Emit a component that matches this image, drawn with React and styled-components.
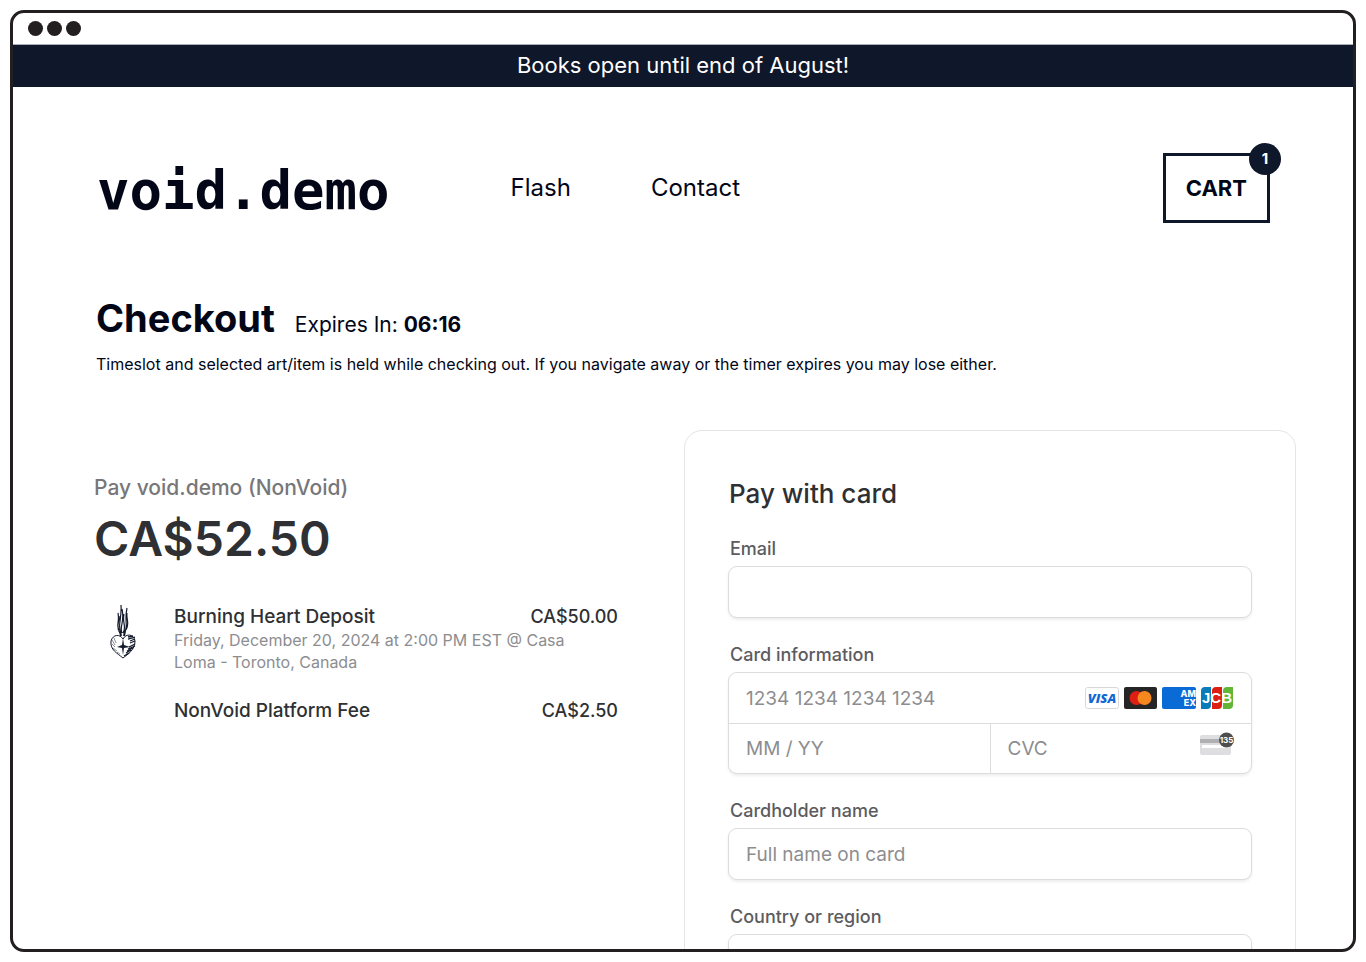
import React from "react";
import styled, { createGlobalStyle } from "styled-components";

// Styles
const GlobalStyle = createGlobalStyle`
  * {
    box-sizing: border-box;
  }

  body {
    margin: 0;
    background: #ffffff;
    color: #020617;
    font-family: Inter, "Liberation Sans", sans-serif;
  }

  h1, h2, p, ul {
    margin: 0;
    padding: 0;
  }
`;

const Browser = styled.div`
  height: calc(100vh - 20px);
  margin: 10px;
  border: 3px solid #231f20;
  border-radius: 14px;
  overflow: hidden;
`;

const TitleBar = styled.div`
  display: flex;
  align-items: center;
  gap: 4px;
  height: 31px;
  padding: 0 15px;
`;

const Dot = styled.span`
  width: 15px;
  height: 15px;
  border-radius: 50%;
  background: #231f20;
`;

const Banner = styled.p`
  padding: 5px 6px 7px;
  border-top: 1px solid #a9adb5;
  background: #0f172a;
  color: #ffffff;
  font-size: 22px;
  line-height: 30px;
  text-align: center;
`;

const Header = styled.header`
  display: flex;
  align-items: center;
  padding: 66px 83px 0 84px;
`;

const Logo = styled.a`
  padding-top: 6px;
  color: #020617;
  font-family: "DejaVu Sans Mono", monospace;
  font-size: 54px;
  font-weight: 700;
  line-height: 64px;
  text-decoration: none;
`;

const Nav = styled.nav`
  display: flex;
  gap: 80px;
  margin-left: 121px;

  a {
    color: #020617;
    font-size: 24px;
    line-height: 32px;
    text-decoration: none;
  }
`;

const CartButton = styled.button`
  position: relative;
  height: 70px;
  margin-left: auto;
  padding: 0 20px;
  border: 3px solid #0f172a;
  background: #ffffff;
  color: #020617;
  font-family: inherit;
  font-size: 22px;
  font-weight: 700;
`;

const Badge = styled.span`
  position: absolute;
  top: -13px;
  right: -14px;
  width: 32px;
  border-radius: 50%;
  background: #0f172a;
  color: #ffffff;
  font-size: 15px;
  line-height: 32px;
`;

const Intro = styled.section`
  padding: 71px 83px 0;
`;

const TitleRow = styled.div`
  display: flex;
  align-items: baseline;
  gap: 20px;

  h1 {
    font-size: 38px;
    font-weight: 700;
    line-height: 48px;
  }

  p {
    font-size: 21px;
  }
`;

const Note = styled.p`
  margin-top: 10px;
  font-size: 16px;
  line-height: 24px;
`;

const Checkout = styled.main`
  display: grid;
  grid-template-columns: 524fr 612fr;
  gap: 66px;
  padding: 54px 57px 0 81px;
`;

const Summary = styled.section`
  padding-top: 44px;
`;

const Payee = styled.p`
  color: #77777a;
  font-size: 21px;
  font-weight: 500;
  line-height: 28px;
`;

const Total = styled.p`
  margin: 7px 0 36px;
  color: #2e3033;
  font-size: 48px;
  font-weight: 600;
  line-height: 60px;
`;

const Items = styled.ul`
  display: grid;
  gap: 26px;
  list-style: none;
`;

const Item = styled.li`
  display: grid;
  grid-template-columns: 58px 1fr auto;
  column-gap: 22px;
  color: #2e3033;
  font-size: 19px;
  font-weight: 500;
  line-height: 24px;
`;

const Price = styled.span`
  font-size: 18px;
`;

const Details = styled.p`
  grid-column: 2 / -1;
  padding-right: 36px;
  color: #8d8d90;
  font-size: 16px;
  font-weight: 400;
  line-height: 22px;
`;

const Thumb = styled.div`
  grid-row: span 2;
  height: 56px;
  text-align: center;
`;

const Panel = styled.form`
  padding: 43px;
  border: 1px solid #e4e4e6;
  border-radius: 18px;

  h2 {
    margin-bottom: 23px;
    padding-left: 1px;
    color: #2e3033;
    font-size: 26px;
    font-weight: 500;
    line-height: 40px;
  }
`;

const Field = styled.div`
  margin-bottom: 25px;

  label {
    display: block;
    margin-bottom: 5px;
    padding-left: 2px;
    color: #5c5c60;
    font-size: 18px;
    font-weight: 500;
    line-height: 24px;
  }
`;

const Control = styled.div`
  border: 1px solid #dcdcdf;
  border-radius: 9px;
  background: #ffffff;
  box-shadow: 0 2px 3px rgba(0, 0, 0, 0.07);
`;

const Row = styled.div`
  display: flex;
  align-items: center;
  height: 50px;
  padding: 0 18px 0 17px;

  & + & {
    padding: 0;
    border-top: 1px solid #dcdcdf;
  }
`;

const Cell = styled.div`
  display: flex;
  flex: 1;
  align-items: center;
  height: 100%;
  padding: 0 17px;

  & + & {
    border-left: 1px solid #dcdcdf;
  }
`;

const Input = styled.input`
  flex: 1;
  width: 100%;
  min-width: 0;
  height: 100%;
  padding: 0;
  border: 0;
  outline: 0;
  background: transparent;
  color: #2e3033;
  font-family: inherit;
  font-size: 19px;

  &::placeholder {
    color: #8d8d90;
    opacity: 1;
  }
`;

const Select = styled.select`
  width: 100%;
  height: 50px;
  padding: 0 17px;
  border: 0;
  border-radius: 9px;
  background: #ffffff;
  font-family: inherit;
  font-size: 19px;
`;

const Brands = styled.div`
  display: flex;
  gap: 5px;
`;

const CvcHint = styled.span`
  display: flex;
  padding-bottom: 9px;
`;

// Icons
function HeartArt() {
  return (
    <svg width="28" height="56" viewBox="0 0 28 56" fill="none" stroke="#151b2c">
      <path d="M11 28C6 22 11 17 9 8M12 28C8 21 13 15 12 0M13 28C10 22 16 17 13 4M15 28C20 22 15 17 18 3M14 28C18 22 13 18 15 9M17 25C21 19 17 14 18 8M10 25C7 20 11 16 10 11" strokeWidth="1.2" />
      <path d="M11 26l1 5M16 26l-1 5" strokeWidth="2" />
      <path d="M14 53C8 48 1 45 2 36C4 29 11 29 14 34C17 28 25 29 26 36C26 45 19 49 14 53Z" fill="#fff" strokeWidth="1" />
      <path d="M19 32l5-1M19 34l7-2M21 36l5-2M21 38l5-2M20 42l6-3M19 44l7-3M18 46l6-3M17 48l5-3M15 51l5-3" strokeWidth="1.3" />
      <path d="M3 35l3 5M5 33l2 5M3 39l3 3M4 43l4 3M8 47l3 2" stroke="#8b8f99" strokeWidth="1" />
      <path d="M14 33l1 7 6 2-6 1-1 7-1-7-5-1 5-2Z" fill="#151b2c" stroke="none" />
    </svg>
  );
}

function Visa() {
  return (
    <svg width="34" height="22" viewBox="0 0 34 22" role="img" aria-label="Visa">
      <rect x="0.5" y="0.5" width="33" height="21" rx="2" fill="#fff" stroke="#d8d8da" />
      <text x="17" y="16" textAnchor="middle" fontFamily="Open Sans, sans-serif" fontSize="13" fontWeight="800" fontStyle="italic" fill="#1268d3">VISA</text>
    </svg>
  );
}

function Mastercard() {
  return (
    <svg width="33" height="22" viewBox="0 0 33 22" role="img" aria-label="Mastercard">
      <rect width="33" height="22" rx="2" fill="#252525" />
      <circle cx="12.5" cy="11" r="7" fill="#dc1f12" />
      <circle cx="20.5" cy="11" r="7" fill="#f5871f" />
    </svg>
  );
}

function Amex() {
  return (
    <svg width="34" height="22" viewBox="0 0 34 22" role="img" aria-label="American Express">
      <rect width="34" height="22" rx="2" fill="#0a6bd6" />
      <g fill="#fff" fontFamily="Inter, sans-serif" fontSize="9" fontWeight="800" textAnchor="end">
        <text x="34" y="10">AM</text>
        <text x="34" y="19">EX</text>
      </g>
    </svg>
  );
}

function Jcb() {
  return (
    <svg width="32" height="22" viewBox="0 0 32 22" role="img" aria-label="JCB">
      <path d="M4 0h6v18a4 4 0 0 1-4 4H0V4a4 4 0 0 1 4-4Z" fill="#0a7cb8" />
      <path d="M15 0h6v18a4 4 0 0 1-4 4h-6V4a4 4 0 0 1 4-4Z" fill="#dc1f12" />
      <path d="M26 0h6v18a4 4 0 0 1-4 4h-6V4a4 4 0 0 1 4-4Z" fill="#62b536" />
      <text x="16" y="16" textAnchor="middle" fontFamily="Liberation Sans, sans-serif" fontSize="15" fontWeight="700" fill="#fff">JCB</text>
    </svg>
  );
}

function CvcIcon() {
  return (
    <svg width="34" height="30" viewBox="0 0 34 30" aria-hidden="true">
      <rect y="6" width="31" height="20" rx="2" fill="#dedee0" />
      <rect y="10" width="31" height="4" fill="#b0b0b2" />
      <rect x="2" y="16" width="27" height="3" fill="#fff" />
      <circle cx="26.5" cy="11" r="7.5" fill="#4d4d50" />
      <text x="26.5" y="14" textAnchor="middle" fontFamily="Inter, sans-serif" fontSize="8" fontWeight="700" fill="#fff">135</text>
    </svg>
  );
}

function App() {
  return (
    <>
      <GlobalStyle />
      <Browser>
        <TitleBar>
          <Dot />
          <Dot />
          <Dot />
        </TitleBar>
        <Banner>Books open until end of August!</Banner>
        <Header>
          <Logo href="#">void.demo</Logo>
          <Nav>
            <a href="#flash">Flash</a>
            <a href="#contact">Contact</a>
          </Nav>
          <CartButton type="button">
            CART
            <Badge>1</Badge>
          </CartButton>
        </Header>
        <Intro>
          <TitleRow>
            <h1>Checkout</h1>
            <p>
              Expires In: <b>06:16</b>
            </p>
          </TitleRow>
          <Note>
            Timeslot and selected art/item is held while checking out. If you
            navigate away or the timer expires you may lose either.
          </Note>
        </Intro>
        <Checkout>
          <Summary>
            <Payee>Pay void.demo (NonVoid)</Payee>
            <Total>CA$52.50</Total>
            <Items>
              <Item>
                <Thumb>
                  <HeartArt />
                </Thumb>
                <span>Burning Heart Deposit</span>
                <Price>CA$50.00</Price>
                <Details>
                  Friday, December 20, 2024 at 2:00 PM EST @ Casa Loma -
                  Toronto, Canada
                </Details>
              </Item>
              <Item>
                <span />
                <span>NonVoid Platform Fee</span>
                <Price>CA$2.50</Price>
              </Item>
            </Items>
          </Summary>
          <Panel>
            <h2>Pay with card</h2>
            <Field>
              <label htmlFor="email">Email</label>
              <Control>
                <Row>
                  <Input id="email" type="email" />
                </Row>
              </Control>
            </Field>
            <Field>
              <label htmlFor="card">Card information</label>
              <Control>
                <Row>
                  <Input id="card" placeholder="1234 1234 1234 1234" />
                  <Brands>
                    <Visa />
                    <Mastercard />
                    <Amex />
                    <Jcb />
                  </Brands>
                </Row>
                <Row>
                  <Cell>
                    <Input aria-label="Expiry date" placeholder="MM / YY" />
                  </Cell>
                  <Cell>
                    <Input aria-label="CVC" placeholder="CVC" />
                    <CvcHint>
                      <CvcIcon />
                    </CvcHint>
                  </Cell>
                </Row>
              </Control>
            </Field>
            <Field>
              <label htmlFor="name">Cardholder name</label>
              <Control>
                <Row>
                  <Input id="name" placeholder="Full name on card" />
                </Row>
              </Control>
            </Field>
            <Field>
              <label htmlFor="country">Country or region</label>
              <Control>
                <Select id="country">
                  <option>Canada</option>
                </Select>
              </Control>
            </Field>
          </Panel>
        </Checkout>
      </Browser>
    </>
  );
}

export default App;
